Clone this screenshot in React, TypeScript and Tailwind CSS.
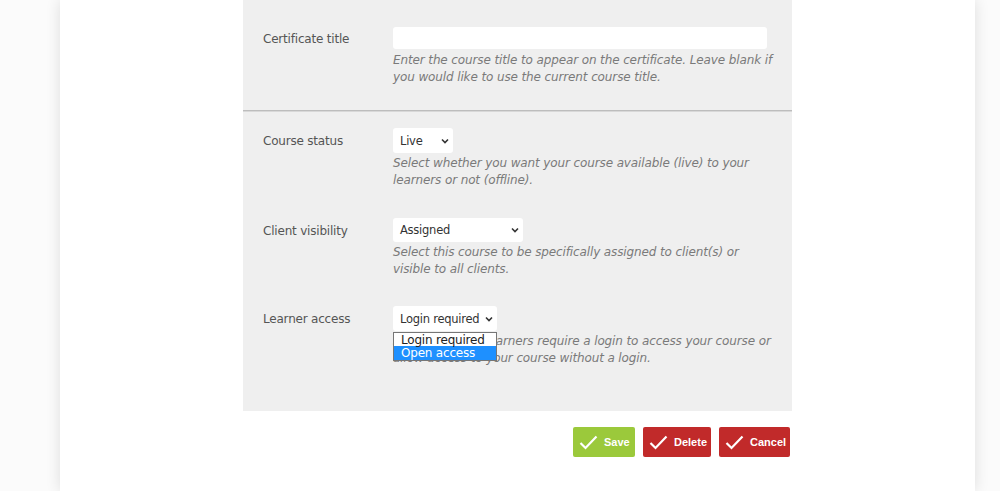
import React from 'react';

const Chevron: React.FC = () => (
  <svg width="8" height="6" viewBox="0 0 8 6" className="absolute right-[4px] top-1/2 -translate-y-1/2">
    <path d="M1 1.5 L4 4.5 L7 1.5" fill="none" stroke="#333" strokeWidth="1.6" />
  </svg>
);

const Check: React.FC = () => (
  <svg width="19" height="15" viewBox="0 0 19 15" className="shrink-0">
    <path d="M1.5 8 L6.5 13 L17.5 1.5" fill="none" stroke="#fff" strokeWidth="2.2" />
  </svg>
);

const FakeSelect: React.FC<{ value: string; width: string; height: string }> = ({ value, width, height }) => (
  <div className={`relative bg-white rounded-[3px] flex items-center pl-[7px] pt-[2px] text-[11.5px] tracking-[-0.25px] text-[#333] ${width} ${height}`}>
    {value}
    <Chevron />
  </div>
);

const Help: React.FC<{ lines: string[]; top?: string }> = ({ lines, top = 'mt-[2px]' }) => (
  <p className={`italic text-[12px] tracking-[-0.12px] leading-[17px] text-[#7a7a7a] whitespace-nowrap ${top}`}>
    {lines.map((l, i) => (
      <span key={i} className="block">{l}</span>
    ))}
  </p>
);

const Label: React.FC<{ children: React.ReactNode; lh: string }> = ({ children, lh }) => (
  <div className={`text-[12px] tracking-[-0.2px] text-[#555] ${lh}`}>{children}</div>
);

const App: React.FC = () => {
  return (
    <div className="h-[491px] w-[1000px] overflow-hidden bg-[#fbfbfb]" style={{ fontFamily: '"DejaVu Sans", Verdana, sans-serif' }}>
      <div className="ml-[60px] w-[915px] h-full bg-white shadow-[0_0_14px_rgba(0,0,0,0.12)] pl-[183px]">
        <div className="w-[549px] bg-[#efefef]">
          {/* certificate */}
          <div className="grid grid-cols-[130px_1fr] px-5 pt-[27px] h-[110px]">
            <Label lh="leading-[24px]">Certificate title</Label>
            <div>
              <div className="h-[22px] w-[374px] bg-white rounded-[3px]" />
              <Help
                top="mt-[3px]"
                lines={[
                  'Enter the course title to appear on the certificate. Leave blank if',
                  'you would like to use the current course title.',
                ]}
              />
            </div>
          </div>
          <div className="h-[2px] bg-[#bdbdbd] border-b border-[#d8d8d8]" />
          {/* status */}
          <div className="px-5 pt-[16px] pb-[44px] flex flex-col">
            <div className="grid grid-cols-[130px_1fr]">
              <Label lh="leading-[26px]">Course status</Label>
              <div>
                <FakeSelect value="Live" width="w-[60px]" height="h-[25px]" />
                <Help
                  lines={[
                    'Select whether you want your course available (live) to your',
                    'learners or not (offline).',
                  ]}
                />
              </div>
            </div>
            <div className="grid grid-cols-[130px_1fr] mt-[29px]">
              <Label lh="leading-[26px]">Client visibility</Label>
              <div>
                <FakeSelect value="Assigned" width="w-[130px]" height="h-[24px]" />
                <Help
                  lines={[
                    'Select this course to be specifically assigned to client(s) or',
                    'visible to all clients.',
                  ]}
                />
              </div>
            </div>
            <div className="grid grid-cols-[130px_1fr] mt-[28px]">
              <Label lh="leading-[26px]">Learner access</Label>
              <div className="relative">
                <FakeSelect value="Login required" width="w-[104px]" height="h-[25px]" />
                <Help
                  lines={[
                    'Select whether learners require a login to access your course or',
                    'allow access to your course without a login.',
                  ]}
                />
                <div className="absolute left-0 top-[26px] w-[104px] border border-[#767676] bg-white text-[12px] tracking-[-0.2px] leading-[13px] text-[#222]">
                  <div className="pl-[7px] h-[13px] pt-[1px]">Login required</div>
                  <div className="pl-[7px] h-[14px] pt-[1px] bg-[#1e90ff] text-white">Open access</div>
                </div>
              </div>
            </div>
          </div>
        </div>
        <div className="w-[549px] flex justify-end gap-2 pr-[2px] pt-[16px]" style={{ fontFamily: '"Liberation Sans", Arial, sans-serif' }}>
          <button className="h-[30px] w-[62px] bg-[#9bc93b] rounded-[2px] flex items-center gap-[6px] pl-[6px] text-white text-[11px] font-bold">
            <Check />Save
          </button>
          <button className="h-[30px] w-[68px] bg-[#c12a2a] rounded-[2px] flex items-center gap-[6px] pl-[6px] text-white text-[11px] font-bold">
            <Check />Delete
          </button>
          <button className="h-[30px] w-[71px] bg-[#c12a2a] rounded-[2px] flex items-center gap-[6px] pl-[6px] text-white text-[11px] font-bold">
            <Check />Cancel
          </button>
        </div>
      </div>
    </div>
  );
};

export default App;
